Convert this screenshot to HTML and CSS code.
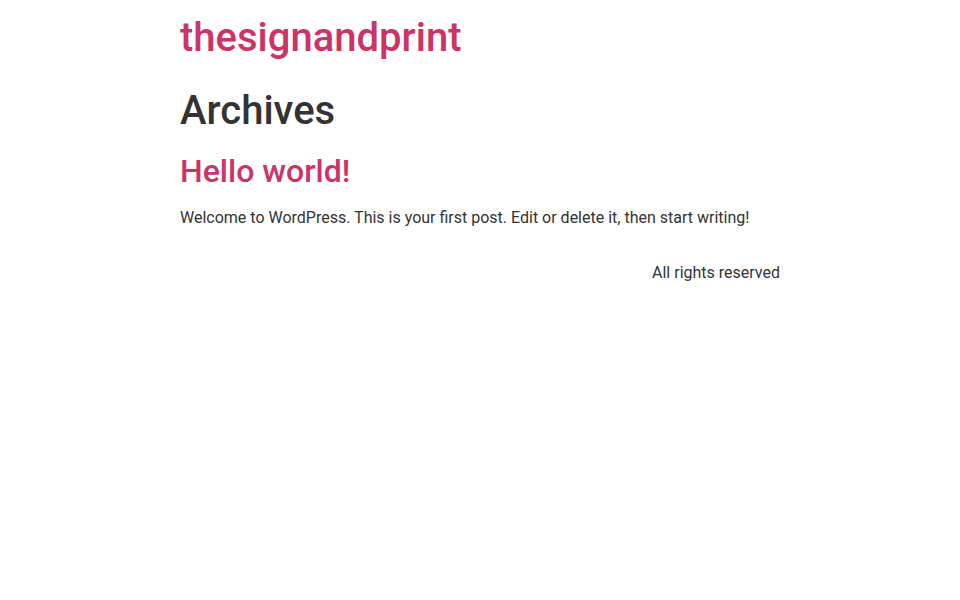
FILE: index.html
```html
<!DOCTYPE html>
<html lang="en">
<head>
<meta charset="utf-8">
<title>Archives – thesignandprint</title>
<link rel="stylesheet" href="styles.css">
</head>
<body>
<header class="site-header">
  <div class="site-branding">
    <h1 class="site-title"><a href="#">thesignandprint</a></h1>
  </div>
</header>
<main class="site-main">
  <div class="page-header">
    <h1 class="entry-title">Archives</h1>
  </div>
  <div class="page-content">
    <article class="post">
      <h2 class="entry-title"><a href="#">Hello world!</a></h2>
      <p>Welcome to WordPress. This is your first post. Edit or delete it, then start writing!</p>
    </article>
  </div>
</main>
<footer class="site-footer">
  <div class="copyright">
    <p>All rights reserved</p>
  </div>
</footer>
</body>
</html>
```

FILE: styles.css
```css
html { line-height: 1.15; }
body {
  margin: 0;
  background: #fff;
  color: #333;
  font-family: Roboto, "Liberation Sans", Arial, sans-serif;
  font-size: 16px;
  line-height: 1.5;
}
a { color: #c36; text-decoration: none; }
h1, h2 {
  font-weight: 500;
  line-height: 1.2;
  margin: 8px 0 16px;
  color: inherit;
}
h1 { font-size: 40px; }
h2 { font-size: 32px; }
p { margin: 0 0 14.4px; }

.site-header, .site-main, .site-footer {
  width: 600px;
  margin: 0 auto;
}
.site-header {
  padding: 14px 0 17px;
}
.site-title {
  margin: 0;
}
.page-header .entry-title { margin: 8px 0 17px; }
.site-footer {
  padding: 16px 0 15px;
}
.copyright {
  text-align: right;
}
```
